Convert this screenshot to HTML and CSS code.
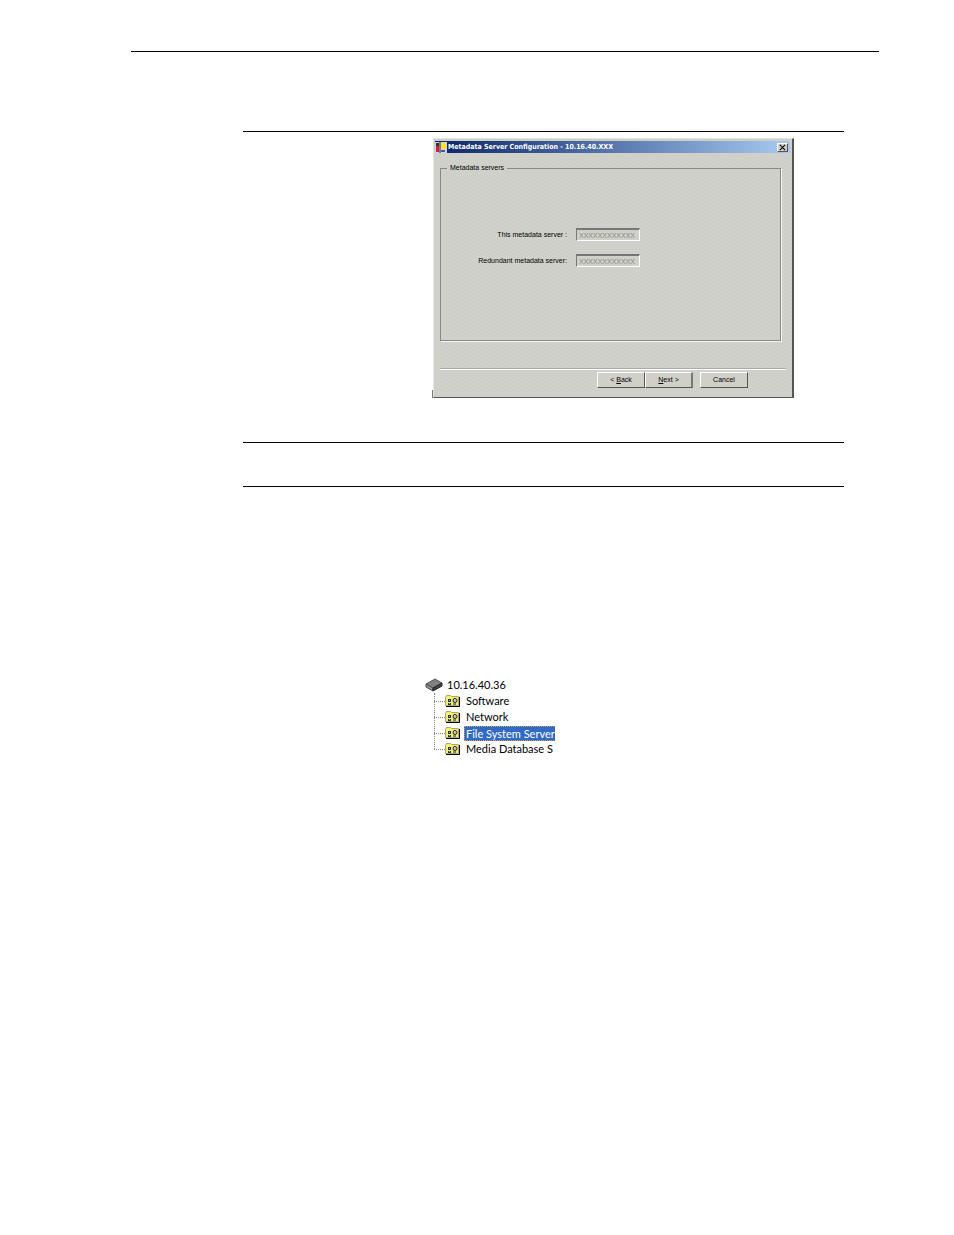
FILE: index.html
```html
<!DOCTYPE html>
<html lang="en">
<head>
    <meta charset="UTF-8">
    <meta name="viewport" content="width=device-width, initial-scale=1.0">
    <title>Metadata Server Configuration</title>
    <link rel="stylesheet" href="styles.css">
</head>
<body>
    <!-- Symbols shared by the tree rows -->
    <svg class="symbols" aria-hidden="true">
        <symbol id="folder" viewBox="0 0 16 14">
            <path d="M.5 3.5L1.5 1.500H5.500L6.500 2.500H13.500V11.500H.5Z" fill="#f7ee72" stroke="#a8a870"/>
            <path d="M14.500 3V12.500H1" fill="none" stroke="#000"/>
            <path d="M3 5H6V8H3ZM3 9H6V11H3Z" fill="#333"/>
            <path d="M4 6H5V7H4ZM4 9H5V10H4Z" fill="#4cc"/>
            <circle cx="10" cy="6.500" r="2" fill="#ccc" stroke="#222"/>
            <path d="M8 10H11" stroke="#222"/>
        </symbol>
    </svg>

    <div class="page">
        <hr class="rule">

        <div class="content">
            <hr class="rule">

            <form class="dialog">
                <div class="title-bar">
                    <svg class="app-icon" viewBox="0 0 12 11" aria-hidden="true">
                        <path d="M0 0H12V11H0Z" fill="#d4d4de"/>
                        <path d="M1 1H4V4H1Z" fill="#333"/>
                        <path d="M1 4H4V10H1Z" fill="#d02040"/>
                        <path d="M6 1H11V7H6Z" fill="#ffe02c"/>
                        <path d="M6 8H10V10H6Z" fill="#3858c0"/>
                        <path d="M5 0V11" stroke="#223"/>
                    </svg>
                    <span class="title">Metadata Server Configuration - 10.16.40.XXX</span>
                    <button type="button" class="close" aria-label="Close">
                        <svg viewBox="0 0 8 8" aria-hidden="true"><path d="M1 1L7 7M7 1L1 7" stroke="#000" stroke-width="1.2"/></svg>
                    </button>
                </div>

                <fieldset class="servers">
                    <legend>Metadata servers</legend>
                    <div class="field">
                        <label for="this-server">This metadata server :</label>
                        <input type="text" id="this-server" value="XXXXXXXXXXXX" disabled>
                    </div>
                    <div class="field">
                        <label for="redundant-server">Redundant metadata server:</label>
                        <input type="text" id="redundant-server" value="XXXXXXXXXXXX" disabled>
                    </div>
                </fieldset>

                <div class="buttons">
                    <button type="button">&lt; <u>B</u>ack</button>
                    <button type="button" class="default"><u>N</u>ext &gt;</button>
                    <button type="button" class="cancel">Cancel</button>
                </div>
            </form>

            <hr class="rule">
            <hr class="rule note-end">

            <div class="tree">
                <div class="root">
                    <svg class="device" viewBox="0 0 18 14" aria-hidden="true">
                        <path d="M1 6L10 1L17 5L8 10Z" fill="#808080" stroke="#555"/>
                        <path d="M1 6L8 10V13L1 9Z" fill="#777" stroke="#555"/>
                        <path d="M8 10L17 5V8L8 13Z" fill="#444" stroke="#222"/>
                        <path d="M2 8L7 11" stroke="#aaa"/>
                    </svg>
                    <span>10.16.40.36</span>
                </div>
                <ul>
                    <li><svg class="folder"><use href="#folder"/></svg><span>Software</span></li>
                    <li><svg class="folder"><use href="#folder"/></svg><span>Network</span></li>
                    <li class="selected"><svg class="folder"><use href="#folder"/></svg><span>File System Server</span></li>
                    <li><svg class="folder"><use href="#folder"/></svg><span>Media Database S</span></li>
                </ul>
            </div>
        </div>
    </div>
</body>
</html>
```

FILE: styles.css
```css
* {
    box-sizing: border-box;
}
body {
    margin: 0;
    background: #fff;
    color: #000;
    font-family: "Liberation Sans", Arial, sans-serif;
}
.symbols {
    position: absolute;
    width: 0;
    height: 0;
}
.page {
    padding: 51px 75px 0 131px;
}
.rule {
    height: 1px;
    margin: 0;
    border: 0;
    background: #000;
}
.content {
    padding: 79px 35px 0 112px;
}

/* Dialog window */
.dialog {
    position: relative;
    width: 361px;
    margin: 6px 0 44px 190px;
    padding: 2px 2px 9px 1px;
    border: 1px solid #e4e4de;
    border-right: 2px solid #555;
    border-bottom: 1px solid #555;
    background: repeating-conic-gradient(#d2d2ca 0 25%, #cccec8 0 50%) 0 0 / 4px 4px;
    font-size: 7px;
    line-height: 10px;
}
.dialog::before {
    content: "";
    position: absolute;
    left: -2px;
    bottom: -1px;
    width: 1px;
    height: 8px;
    background: #777;
}
.title-bar {
    display: flex;
    align-items: center;
    height: 12px;
    padding-right: 2px;
    background: linear-gradient(to right, #0a246a, #a6caf0);
    color: #fff;
}
.app-icon {
    width: 12px;
    height: 11px;
}
.title {
    flex: 1;
    padding-left: 1px;
    font-family: "DejaVu Sans Condensed", "DejaVu Sans", Verdana, sans-serif;
    font-weight: bold;
    white-space: nowrap;
}
button {
    padding: 0;
    border: 1px solid;
    border-color: #fff #555 #555 #fff;
    background: #d0d0c8;
    color: #000;
    font-family: inherit;
    font-size: 7px;
    line-height: 10px;
}
.close {
    display: flex;
    align-items: center;
    justify-content: center;
    width: 11px;
    height: 9px;
}
.close svg {
    width: 7px;
    height: 7px;
}
.servers {
    height: 178px;
    margin: 10px 9px 27px 5px;
    padding: 55px 0 0 0;
    border: 1px solid #888;
    box-shadow: 1px 1px 0 #f4f4f0;
}
.servers legend {
    margin-left: 6px;
    padding: 0 3px;
}
.field {
    display: flex;
    align-items: center;
    height: 13px;
    margin-bottom: 13px;
}
.field label {
    width: 126px;
    text-align: right;
    white-space: nowrap;
}
.field input {
    width: 64px;
    height: 13px;
    margin-left: 9px;
    padding: 0 2px;
    border: 1px solid;
    border-width: 2px 1px 1px 1px;
    border-color: #777 #fff #fff #777;
    background: transparent;
    color: #888;
    font-family: inherit;
    font-size: 7px;
}
.buttons {
    display: flex;
    margin: 0 4px 0 5px;
    padding: 3px 38px 0 0;
    justify-content: flex-end;
    border-top: 1px solid #aaa;
    box-shadow: inset 0 1px 0 #fff;
}
.buttons button {
    width: 48px;
    height: 16px;
}
.buttons .default {
    border-right: 2px solid #777;
}
.buttons .cancel {
    margin-left: 7px;
}
.note-end {
    margin-top: 43px;
}

/* Device tree */
.tree {
    width: 130px;
    margin: 190px 0 0 182px;
    overflow: hidden;
    font-family: Lato, "Liberation Sans", sans-serif;
    font-size: 11px;
    line-height: 16px;
    white-space: nowrap;
}
.root {
    display: flex;
    align-items: center;
    height: 16px;
}
.device {
    width: 18px;
    height: 14px;
    margin-right: 4px;
}
.tree ul {
    position: relative;
    margin: 0;
    padding: 0 0 0 9px;
    list-style: none;
}
.tree ul::before {
    content: "";
    position: absolute;
    top: 0;
    bottom: 8px;
    left: 9px;
    border-left: 1px dotted #888;
}
.tree li {
    display: flex;
    align-items: center;
    height: 16px;
}
.tree li::before {
    content: "";
    flex: none;
    width: 11px;
    border-top: 1px dotted #888;
}
.folder {
    flex: none;
    width: 16px;
    height: 14px;
    margin-right: 3px;
}
.tree li span {
    flex: none;
    padding: 0 2px;
}
.tree .selected span {
    flex: 1 0 auto;
    height: 15px;
    padding: 0 1px;
    border: 1px dotted #d0a050;
    border-right: 0;
    background: #316ac5;
    color: #fff;
    line-height: 14px;
}
```
